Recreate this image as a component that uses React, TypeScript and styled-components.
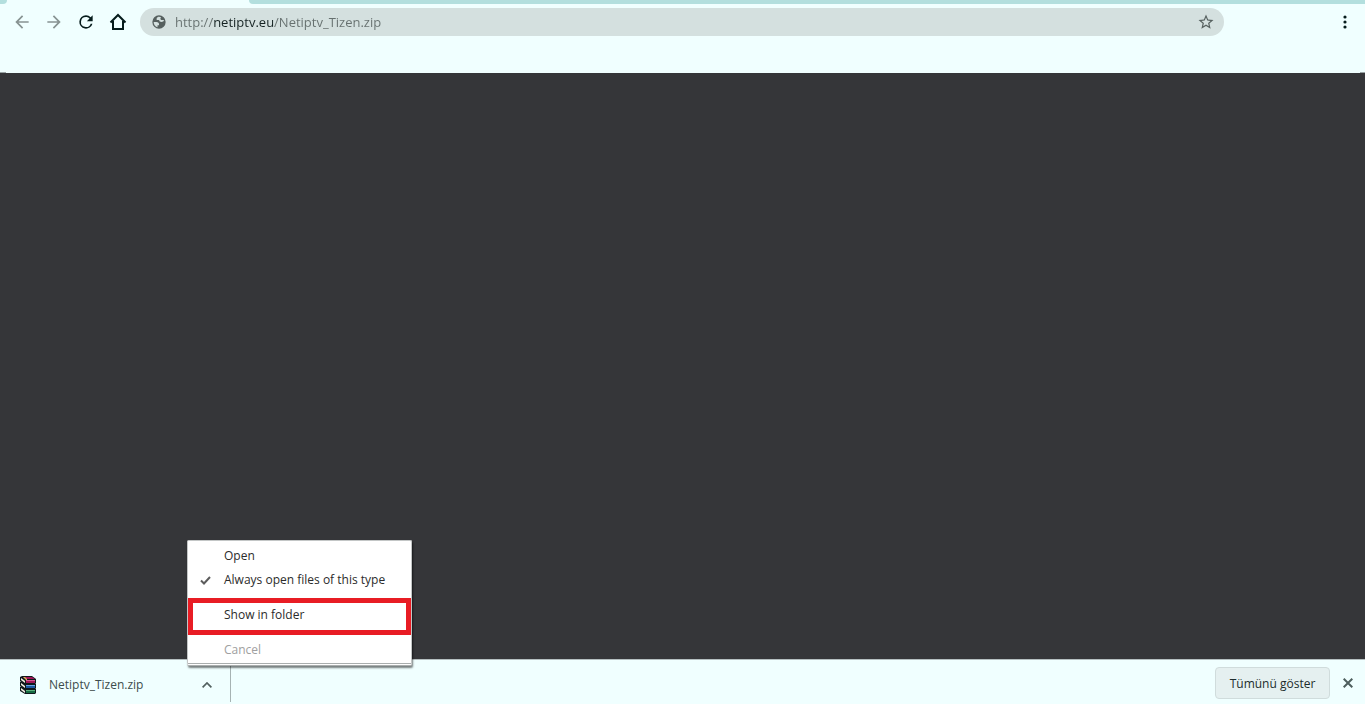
import React from "react";
import styled, { createGlobalStyle } from "styled-components";

const GlobalStyle = createGlobalStyle`
  * { box-sizing: border-box; }
  body {
    margin: 0;
    background: #353639;
    font-family: "Open Sans", "Noto Sans", sans-serif;
  }
  button { font: inherit; border: 0; padding: 0; background: none; }
`;

const Window = styled.div`
  display: flex;
  flex-direction: column;
  min-height: 100vh;
`;

const TabStrip = styled.div`
  display: flex;
  height: 4px;
  background: #f0ffff;
`;

const StripEdge = styled.div<{ $grow?: boolean }>`
  flex: ${(p) => (p.$grow ? "1" : "0 0 7px")};
  background: #b3dfde;
  border-radius: ${(p) => (p.$grow ? "0 0 0 6px" : "0 0 6px 0")};
`;

const ActiveTab = styled.div`
  flex: 0 0 242px;
`;

const Toolbar = styled.header`
  display: flex;
  align-items: center;
  height: 69px;
  padding: 4px 8px 37px 6px;
  background:
    linear-gradient(#9aa4a5, #9aa4a5) left bottom / 6px 1px no-repeat,
    linear-gradient(#9aa4a5, #9aa4a5) right bottom / 5px 1px no-repeat,
    #f0ffff;
`;

const IconButton = styled.button<{ $color: string; $size?: number }>`
  display: flex;
  align-items: center;
  justify-content: center;
  flex: none;
  width: ${(p) => p.$size ?? 32}px;
  height: 28px;
  color: ${(p) => p.$color};
`;

const AddressBar = styled.div`
  display: flex;
  align-items: center;
  flex: 1;
  height: 28px;
  margin: 0 109px 0 6px;
  padding: 0 8px 0 11px;
  border-radius: 14px;
  background: #d4e0df;
  color: #56605f;
`;

const AddressInput = styled.input`
  flex: 1;
  min-width: 0;
  height: 28px;
  margin-left: 8px;
  padding: 0;
  border: 0;
  outline: 0;
  font: 13px/28px "Open Sans", "Noto Sans", sans-serif;
  color: transparent;
  background: linear-gradient(90deg, #66706f 39px, #142222 39px, #142222 98px, #66706f 98px);
  background-clip: text;
  -webkit-background-clip: text;
`;

const Page = styled.main`
  flex: 1;
  background: #353639;
`;

const Shelf = styled.footer`
  display: flex;
  align-items: center;
  height: 45px;
  padding-right: 5px;
  border-top: 1px solid #b5bfc0;
  background: #f0ffff;
`;

const Download = styled.div`
  position: relative;
  display: flex;
  align-items: center;
  align-self: flex-start;
  width: 231px;
  height: 42px;
  padding: 7px 7px 0 20px;
  border-right: 1px solid #a6b3b3;
`;

const FileLink = styled.a`
  display: flex;
  align-items: center;
  flex: 1;
  gap: 12px;
  color: #3c4c4c;
  font-size: 12px;
  line-height: 18px;
  text-decoration: none;
`;

const Menu = styled.div`
  position: absolute;
  left: 187px;
  bottom: 36px;
  width: 225px;
  padding: 3px 0 1px;
  border: 1px solid #c3c6c6;
  border-bottom: 3px double #aaaeae;
  border-radius: 2px;
  background: #fff;
  box-shadow: 1px 2px 2px rgba(0, 0, 0, 0.5);
`;

const MenuItem = styled.button<{ $marked?: boolean }>`
  display: flex;
  align-items: center;
  width: 100%;
  height: ${(p) => (p.$marked ? 37 : 24)}px;
  margin: ${(p) => (p.$marked ? "6px 0 3px" : "0")};
  padding: ${(p) => (p.$marked ? "0 0 3px 31px" : "0 0 0 12px")};
  border: ${(p) => (p.$marked ? "5px solid #e81c24" : "0")};
  color: #2b2b2b;
  font-size: 12px;
  line-height: 18px;
  &:disabled { color: #a0a0a0; }
`;

const CheckSlot = styled.span`
  display: flex;
  width: 24px;
`;

const ShowAll = styled.button`
  height: 32px;
  width: 115px;
  margin: 2px 6px 0 auto;
  border: 1px solid #d0dcdc;
  border-radius: 4px;
  background: #e5f0f0;
  color: #1c2c2c;
  font-size: 12px;
  font-weight: 500;
`;

const CloseButton = styled(IconButton)`
  margin-top: 2px;
`;

const Glyph = ({ d, size = 20 }: { d: string; size?: number }) => (
  <svg width={size} height={size} viewBox="0 0 24 24" fill="currentColor" aria-hidden="true">
    <path d={d} />
  </svg>
);

const BACK = "M20 11H7.83l5.59-5.59L12 4l-8 8 8 8 1.41-1.41L7.83 13H20v-2z";
const FORWARD = "M12 4l-1.41 1.41L16.17 11H4v2h12.17l-5.58 5.59L12 20l8-8z";
const RELOAD =
  "M17.65 6.35A7.96 7.96 0 0 0 12 4a8 8 0 1 0 7.73 10h-2.08A6 6 0 1 1 12 6c1.66 0 3.14.69 4.22 1.78L13 11h7V4z";
const STAR =
  "M22 9.24l-7.19-.62L12 2 9.19 8.63 2 9.24l5.46 4.73L5.82 21 12 17.27 18.18 21l-1.63-7.03zM12 15.4l-3.76 2.27 1-4.28-3.32-2.88 4.38-.38L12 6.1l1.71 4.04 4.38.38-3.32 2.88 1 4.28z";
const GLOBE =
  "M12 2a10 10 0 1 0 0 20 10 10 0 0 0 0-20zM4 12h4.2c2.8 0 3.8 1.4 3.8 3.4V17H9.8v2.7A8 8 0 0 1 4 12zm15.8-1.7c-1 1.1-2.3 1.7-3.8 1.7-2.4 0-3.8-1-3.8-3H8.5V7c0-1.2.9-2 2.2-2V4.1c.5-.1.9-.1 1.3-.1 1.2 0 2.3.3 3.3.7-.8.5-1.2 1.1-1.2 1.9 0 1.3 1 2.4 2.5 2.4h1.9z";

const BOOKS = [
  { y: 10, cover: "#156a43", light: "#5cb07a" },
  { y: 5, cover: "#1c56a0", light: "#68a5e4" },
  { y: 0, cover: "#a01558", light: "#d65a94" },
];

const ArchiveIcon = () => (
  <svg width="17" height="18" viewBox="0 0 17 18" aria-hidden="true">
    {BOOKS.map((b) => (
      <g key={b.y} transform={`translate(0 ${b.y})`}>
        <path d="M0 1l2-1h10l4 3v4l-1 1H5L0 5z" fill="#10181c" />
        <path d="M1 2l4 3v2L1 4z" fill="#f3f0e4" />
        <path d="M3 1h9l3 2H6z" fill={b.cover} />
        <path d="M6 4h9v1H6z" fill={b.light} />
        <path d="M6 5h9v2H6z" fill={b.cover} />
      </g>
    ))}
    <path d="M3 1h2l2 2v1H6z" fill="#d9b45a" />
  </svg>
);

export default function App() {
  return (
    <Window>
      <GlobalStyle />
      <TabStrip>
        <StripEdge />
        <ActiveTab />
        <StripEdge $grow />
      </TabStrip>
      <Toolbar>
        <IconButton $color="#879392" aria-label="Back"><Glyph d={BACK} /></IconButton>
        <IconButton $color="#879392" aria-label="Forward"><Glyph d={FORWARD} /></IconButton>
        <IconButton $color="#061c1c" aria-label="Reload"><Glyph d={RELOAD} /></IconButton>
        <IconButton $color="#061c1c" aria-label="Home">
          <svg width="18" height="18" viewBox="0 0 18 18" fill="none" stroke="currentColor" strokeWidth="2" aria-hidden="true">
            <path d="M1.5 9.5L9 2l7.500 7.500M4 8v8h10V8" />
          </svg>
        </IconButton>
        <AddressBar>
          <Glyph d={GLOBE} size={16} />
          <AddressInput aria-label="Address" defaultValue="http://netiptv.eu/Netiptv_Tizen.zip" spellCheck={false} />
          <IconButton $color="#56605f" $size={20} aria-label="Bookmark this page"><Glyph d={STAR} size={18} /></IconButton>
        </AddressBar>
        <IconButton $color="#061c1c" $size={24} aria-label="Browser menu">
          <svg width="4" height="14" viewBox="0 0 4 14" fill="currentColor" aria-hidden="true">
            <circle cx="2" cy="2" r="1.600" />
            <circle cx="2" cy="7" r="1.600" />
            <circle cx="2" cy="12" r="1.600" />
          </svg>
        </IconButton>
      </Toolbar>
      <Page />
      <Shelf>
        <Download>
          <FileLink href="#"><ArchiveIcon />Netiptv_Tizen.zip</FileLink>
          <IconButton $color="#52605f" aria-label="Download options">
            <svg width="10" height="6" viewBox="0 0 10 6" fill="none" stroke="currentColor" strokeWidth="1.700" aria-hidden="true">
              <path d="M.6 5.400L5 1l4.400 4.400" />
            </svg>
          </IconButton>
          <Menu role="menu">
            <MenuItem role="menuitem"><CheckSlot />Open</MenuItem>
            <MenuItem role="menuitemcheckbox" aria-checked="true">
              <CheckSlot>
                <svg width="11" height="9" viewBox="0 0 11 9" fill="none" stroke="#5c5c5c" strokeWidth="2" aria-hidden="true">
                  <path d="M1 4.500L4 7.500 10 1" />
                </svg>
              </CheckSlot>
              Always open files of this type
            </MenuItem>
            <MenuItem role="menuitem" $marked>Show in folder</MenuItem>
            <MenuItem role="menuitem" disabled><CheckSlot />Cancel</MenuItem>
          </Menu>
        </Download>
        <ShowAll>Tümünü göster</ShowAll>
        <CloseButton $color="#4e5f5e" $size={24} aria-label="Close downloads bar">
          <svg width="10" height="10" viewBox="0 0 10 10" stroke="currentColor" strokeWidth="2" aria-hidden="true">
            <path d="M.7.7l8.600 8.600M9.300.7L.7 9.300" />
          </svg>
        </CloseButton>
      </Shelf>
    </Window>
  );
}
